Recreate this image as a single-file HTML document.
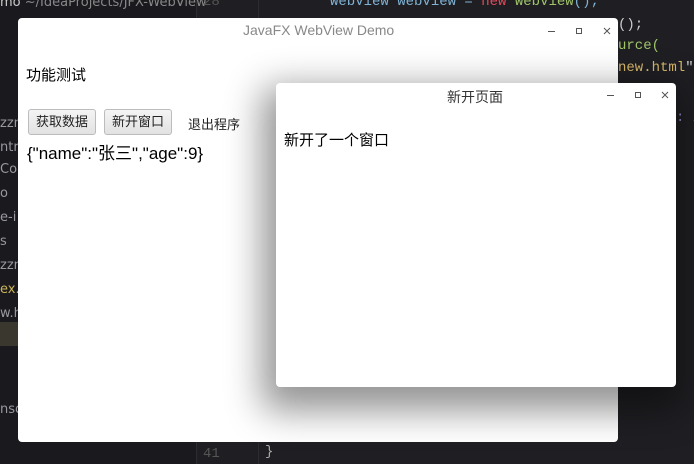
<!DOCTYPE html>
<html><head><meta charset="utf-8">
<style>
*{margin:0;padding:0;box-sizing:border-box}
body{width:694px;height:464px;overflow:hidden;background:#1f1e22;position:relative;font-family:"Liberation Sans","Noto Sans CJK SC",sans-serif}
.code{position:absolute;font-family:"Liberation Mono","DejaVu Sans Mono",monospace;font-size:14px;white-space:pre}
.side{position:absolute;left:0;font-size:13px;color:#9a98a0;font-family:"DejaVu Sans",sans-serif}
.win{position:absolute;background:#fff;border-radius:4px}
.tb{position:absolute;font-size:14px;color:#888}
.ctl{position:absolute}
.btn{position:absolute;height:26px;border:1px solid #bcbcbc;border-radius:3px;background:linear-gradient(#f4f4f4,#e2e2e2);font-size:13px;line-height:24px;padding:0 7px;color:#222}
</style></head><body>
<div style="position:absolute;left:196px;top:0;width:1px;height:464px;background:#2c2b30"></div>
<div style="position:absolute;left:258px;top:0;width:1px;height:464px;background:#2c2b30"></div>
<div style="position:absolute;left:0;top:0;width:196px;height:464px;background:#1a191d"></div>
<div style="position:absolute;left:0;top:322px;width:20px;height:24px;background:#3a372e"></div>
<div class="side" style="top:-5px;color:#ccc">mo <span style="color:#888">~/IdeaProjects/JFX-WebView</span></div>
<div class="side" style="top:116px">zzm</div>
<div class="side" style="top:140px">ntro</div>
<div class="side" style="top:162px">Con</div>
<div class="side" style="top:186px">o</div>
<div class="side" style="top:210px">e-i</div>
<div class="side" style="top:234px">s</div>
<div class="side" style="top:258px">zzm</div>
<div class="side" style="top:282px;color:#c9b35a">ex.h</div>
<div class="side" style="top:306px">w.ht</div>
<div class="side" style="top:402px">nsol</div>
<div class="code" style="left:203px;top:-6px;color:#555">28</div>
<div class="code" style="left:330px;top:-6px;color:#7fb3d5">WebView webView = <span style="color:#e04a5a">new</span> <span style="color:#9fc46a">WebView</span>();</div>
<div class="code" style="left:618px;top:17px;color:#ccc">();</div>
<div class="code" style="left:618px;top:38px;color:#9fc46a">urce(</div>
<div class="code" style="left:618px;top:60px;color:#d8b76a">new.html<span style="color:#ccc">")</span></div>
<div class="code" style="left:676px;top:110px;color:#8a88c8">: 2</div>
<div class="code" style="left:203px;top:446px;color:#555">41</div>
<div class="code" style="left:265px;top:444px;color:#aaa">}</div>

<div class="win" style="left:18px;top:18px;width:600px;height:424px">
 <div class="tb" style="left:225px;top:4px">JavaFX WebView Demo</div>
 <svg class="ctl" style="left:530px;top:8px" width="80" height="10"><g stroke="#555" stroke-width="1" fill="none"><path d="M0 5.5H7"/><rect x="28.5" y="2.5" width="5" height="5"/><path d="M56 2L62 8M62 2L56 8"/></g></svg>
 <div style="position:absolute;left:8px;top:46px;font-size:15px;color:#000">功能测试</div>
 <div class="btn" style="left:10px;top:91px">获取数据</div>
 <div class="btn" style="left:86px;top:91px">新开窗口</div>
 <div style="position:absolute;left:170px;top:96px;font-size:13px;color:#222">退出程序</div>
 <div style="position:absolute;left:9px;top:121px;font-size:17px;color:#000">{"name":"张三","age":9}</div>
</div>

<div class="win" style="left:276px;top:83px;width:400px;height:304px;box-shadow:-4px 14px 36px 10px rgba(0,0,0,.42)">
 <div class="tb" style="left:171px;top:4px;color:#333">新开页面</div>
 <svg class="ctl" style="left:331px;top:7px" width="70" height="10"><g stroke="#555" stroke-width="1" fill="none"><path d="M0 5.5H7"/><rect x="28.5" y="2.5" width="5" height="5"/><path d="M55 2L61 8M61 2L55 8"/></g></svg>
 <div style="position:absolute;left:8px;top:46px;font-size:15px;color:#000">新开了一个窗口</div>
</div>
</body></html>
